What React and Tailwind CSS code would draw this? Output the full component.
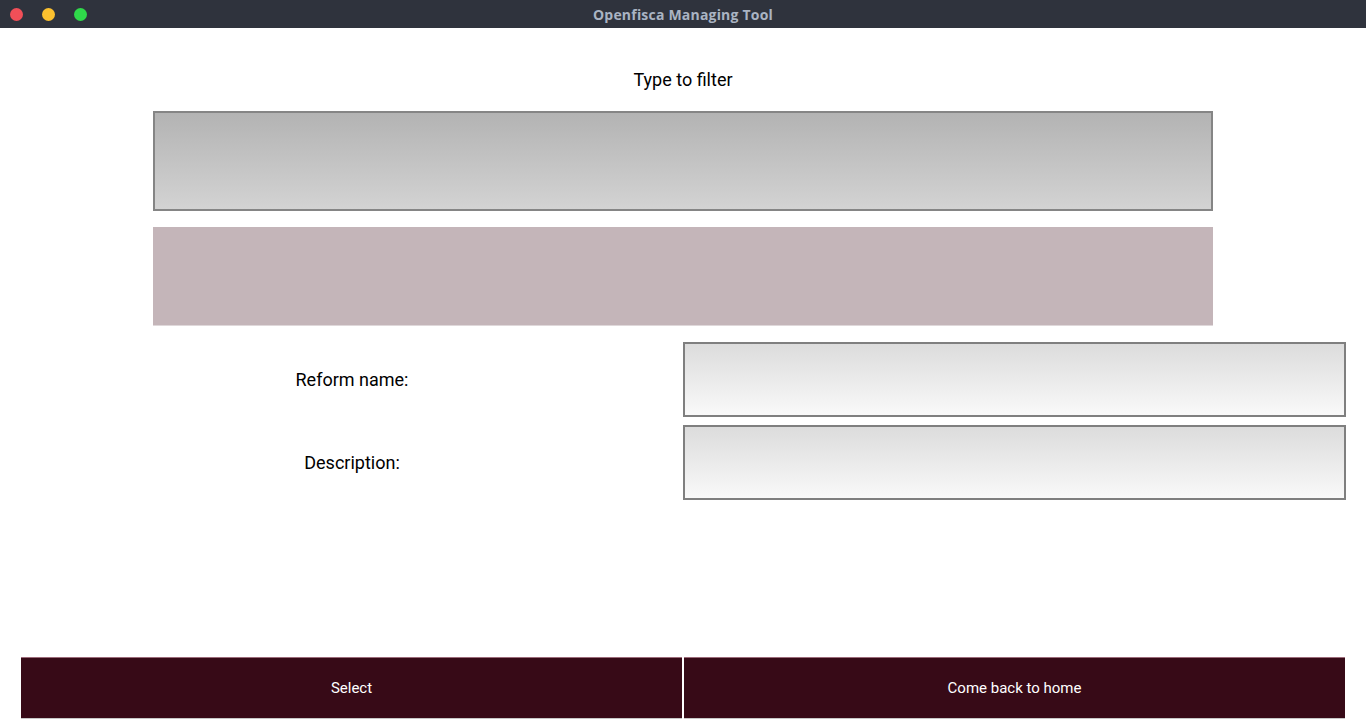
import React from "react";

export default function App() {
  return (
    <div className="w-[1366px] h-[720px] bg-white flex flex-col overflow-hidden" style={{ fontFamily: "Roboto, 'Liberation Sans', sans-serif" }}>
      <div className="h-[28px] bg-[#2f333d] relative flex items-center justify-center shrink-0">
        <div className="absolute left-[10px] top-[8px] flex gap-[19px]">
          <div className="w-[13px] h-[13px] rounded-full bg-[#f14f58]" />
          <div className="w-[13px] h-[13px] rounded-full bg-[#fcc12f]" />
          <div className="w-[13px] h-[13px] rounded-full bg-[#2fd94a]" />
        </div>
        <span className="text-[14px] font-bold text-[#aab4c3] tracking-[0.2px]" style={{ fontFamily: "'Open Sans', 'DejaVu Sans', sans-serif" }}>Openfisca Managing Tool</span>
      </div>
      <div className="flex-1 flex flex-col">
        <div className="pt-[40px] text-center text-[18px] text-black leading-[24px]">Type to filter</div>
        <div className="mt-[19px] ml-[153px] w-[1060px] h-[100px] border-2 border-[#858585] bg-gradient-to-b from-[#b3b3b3] to-[#d3d3d3]" />
        <div className="mt-[16px] ml-[153px] w-[1060px] h-[99px] bg-[#c4b5b9] border-b border-[#dfd8da]" />
        <div className="mt-[16px] ml-[21px] grid grid-cols-[662px_663px] gap-y-[8px]">
          <div className="h-[75px] flex items-center justify-center text-[18px] text-black">Reform name:</div>
          <div className="h-[75px] border-2 border-[#7f7f7f] bg-gradient-to-b from-[#dcdcdc] to-[#f9f9f9]" />
          <div className="h-[75px] flex items-center justify-center text-[18px] text-black">Description:</div>
          <div className="h-[75px] border-2 border-[#7f7f7f] bg-gradient-to-b from-[#dcdcdc] to-[#f9f9f9]" />
        </div>
        <div className="mt-auto mb-[1px] ml-[21px] grid grid-cols-[661px_661px] gap-x-[2px]">
          <div className="h-[62px] bg-[#370a17] border-t border-[#9c6b79] border-b border-b-[#c8c8c8] flex items-center justify-center text-white text-[15px]">Select</div>
          <div className="h-[62px] bg-[#370a17] border-t border-[#9c6b79] border-b border-b-[#c8c8c8] flex items-center justify-center text-white text-[15px]">Come back to home</div>
        </div>
      </div>
    </div>
  );
}
